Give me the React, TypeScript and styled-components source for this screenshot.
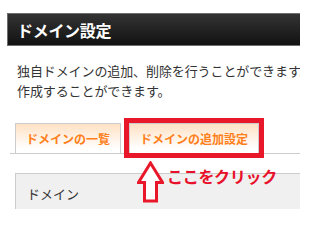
import React from "react";
import styled, { createGlobalStyle } from "styled-components";

const Global = createGlobalStyle`
  html, body { margin: 0; padding: 0; background: #fff; overflow: hidden; }
  body { font-family: "Noto Sans CJK JP", "Noto Sans", sans-serif; }
`;

const Page = styled.div`
  position: relative;
  width: 300px;
  height: 209px;
  overflow: hidden;
  padding: 13px 0 0 7px;
  box-sizing: border-box;
`;

const Header = styled.div`
  width: 320px;
  height: 33px;
  box-sizing: border-box;
  border: 1px solid #6e6e6e;
  background: linear-gradient(#333333, #121212);
  display: flex;
  align-items: center;
  padding-left: 9px;
`;

const Title = styled.h1`
  margin: 0;
  color: #fff;
  font-size: 16px;
  font-weight: 700;
  line-height: 1;
  letter-spacing: -0.3px;
`;

const Intro = styled.p`
  margin: 15px 0 0 10px;
  color: #333;
  font-size: 13px;
  line-height: 20px;
  white-space: nowrap;
  letter-spacing: -0.1px;
`;

const TabStrip = styled.div`
  display: flex;
  align-items: flex-end;
  gap: 8px;
  margin: 22px 0 0 3px;
  padding-left: 5px;
  border-bottom: 1px solid #cccccc;
  width: 320px;
`;

const Tab = styled.div<{ $marked?: boolean }>`
  height: 30px;
  box-sizing: border-box;
  padding: 0 10px;
  display: flex;
  align-items: center;
  border: 1px solid #cccccc;
  border-bottom: none;
  background: linear-gradient(#ffe1c4, #ffffff 85%);
  color: #ff7f1a;
  font-size: 12px;
  font-weight: 700;
  white-space: nowrap;
  outline: ${(p) => (p.$marked ? "5px solid #e8182a" : "none")};
`;

const Panel = styled.div`
  margin: 19px 0 0 8px;
  width: 320px;
  height: 60px;
  box-sizing: border-box;
  border: 1px solid #cccccc;
  background: #f0f0f0;
  padding: 10px 0 0 11px;
  color: #333;
  font-size: 13px;
  line-height: 20px;
`;

const Callout = styled.div`
  position: absolute;
  left: 137px;
  top: 161px;
  display: flex;
  align-items: flex-start;
  gap: 3px;
`;

const CalloutText = styled.span`
  margin-top: 5px;
  color: #e8102a;
  font-size: 16px;
  font-weight: 700;
  line-height: 20px;
  white-space: nowrap;
  letter-spacing: -0.3px;
`;

function UpArrow() {
  return (
    <svg width="27" height="42" viewBox="0 0 27 42">
      <path
        d="M13.5 2 L25.5 21.5 L19.5 21.5 L19.5 40 L7.5 40 L7.5 21.5 L1.5 21.5 Z"
        fill="#fff"
        stroke="#e8182a"
        strokeWidth="3"
        strokeLinejoin="miter"
      />
    </svg>
  );
}

export default function App() {
  return (
    <>
      <Global />
      <Page>
        <Header>
          <Title>ドメイン設定</Title>
        </Header>
        <Intro>
          独自ドメインの追加、削除を行うことができます。また、サブドメインを
          <br />
          作成することができます。
        </Intro>
        <TabStrip>
          <Tab>ドメインの一覧</Tab>
          <Tab $marked>ドメインの追加設定</Tab>
        </TabStrip>
        <Panel>ドメイン</Panel>
        <Callout>
          <UpArrow />
          <CalloutText>ここをクリック</CalloutText>
        </Callout>
      </Page>
    </>
  );
}
